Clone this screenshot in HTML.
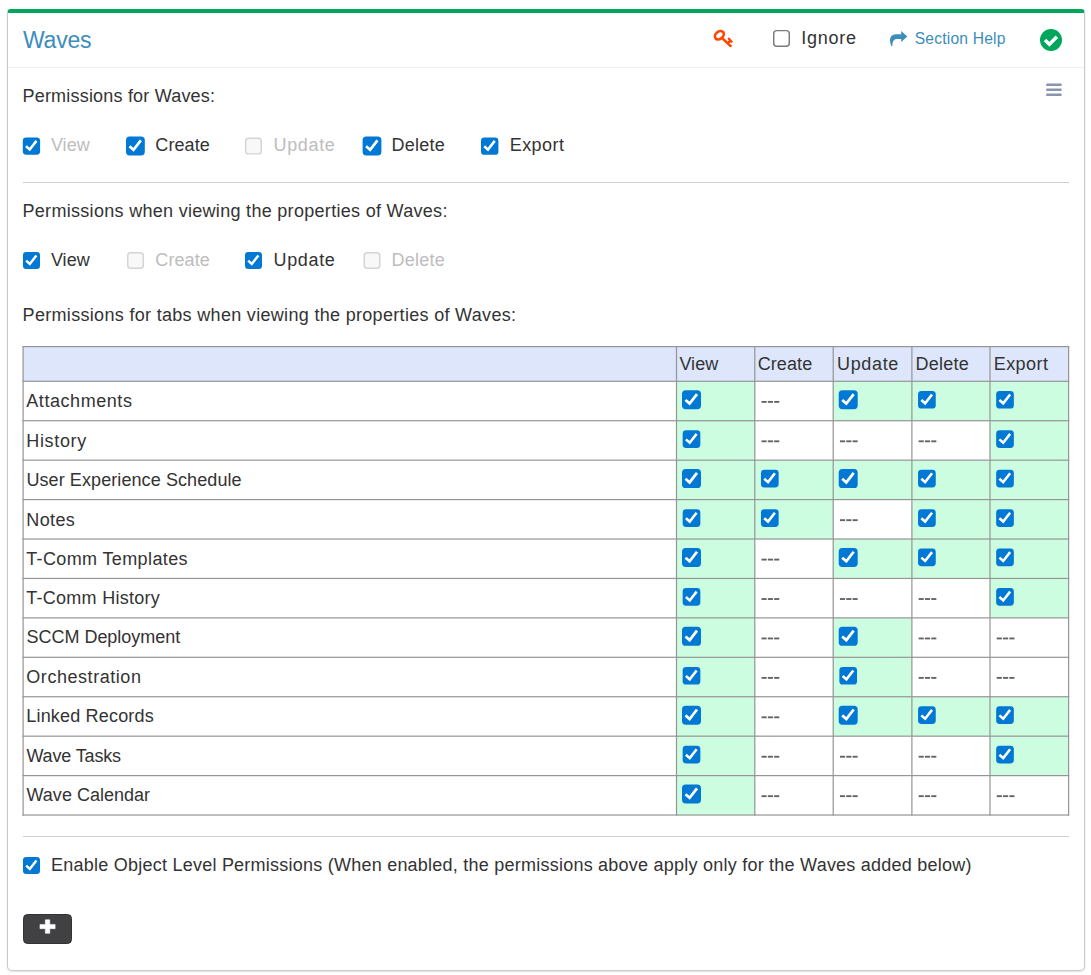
<!DOCTYPE html>
<html><head><meta charset="utf-8"><title>Waves</title>
<style>
html,body{margin:0;padding:0;background:#fff}
body{width:1091px;height:975px;position:relative;overflow:hidden;font-family:'Liberation Sans', sans-serif;color:#333}
.t{position:absolute;white-space:pre;line-height:normal}
.l{position:absolute;background:#8c8c8c}
.g{position:absolute;background:#cdfde0}
.hr{position:absolute;left:23px;width:1046px;height:1px;background:#cfcfcf}
</style></head><body>
<div style="position:absolute;left:7px;top:9px;width:1076px;height:957px;border:1px solid #c9c9c9;border-top:4px solid #00a65a;border-radius:4px 4px 5px 5px;background:#fff;box-shadow:0 1px 2px rgba(0,0,0,.12)"></div>
<div style="position:absolute;left:8px;top:67px;width:1076px;height:1px;background:#f1f1f1"></div>

<svg style="position:absolute;left:712px;top:29px" width="22" height="20" viewBox="0 0 22 20">
<g fill="none" stroke="#ff4500" stroke-width="2.4" stroke-linecap="round">
<ellipse cx="7.35" cy="6.3" rx="4.95" ry="3.6" stroke-width="2.7" transform="rotate(-40 7.35 6.3)"/>
<path d="M10 9 L18.6 17 M16.9 9.7 L19.6 12.7 M16.2 14 L18.2 11.4"/></g>
</svg>
<svg style="position:absolute;left:771px;top:27px" width="26" height="26" viewBox="0 0 26 26"><rect x="2.73" y="3.62" width="15.55" height="15.55" rx="3" fill="#fff" stroke="#7b7b7b" stroke-width="1.45"/></svg>
<svg style="position:absolute;left:889px;top:30px" width="19" height="17" viewBox="0 0 19 17">
<path d="M12.2 1 L18.3 6.5 L12.2 12.1 L12.2 8.9 L8.2 8.9 C5.4 9 3.2 10.6 3.4 16 L2.5 16.3 C-0.6 9.2 1.4 4.3 7 4.2 L12.2 4.2 Z" fill="#3c8dbc"/></svg>
<svg style="position:absolute;left:1040px;top:29px" width="22" height="22" viewBox="0 0 22 22">
<circle cx="11" cy="11" r="11" fill="#00a65a"/>
<path d="M5.0 11.0 L9.4 15.3 L16.9 7.7" fill="none" stroke="#fff" stroke-width="3.5"/></svg>
<svg style="position:absolute;left:1044px;top:80px" width="22" height="20" viewBox="0 0 22 20"><rect x="2.2" y="3.4" width="15.4" height="2.6" rx="0.6" fill="#8b94ae"/><rect x="2.2" y="8.5" width="15.4" height="2.6" rx="0.6" fill="#8b94ae"/><rect x="2.2" y="13.4" width="15.4" height="2.6" rx="0.6" fill="#8b94ae"/></svg>
<svg style="position:absolute;left:20px;top:135px" width="26" height="26" viewBox="0 0 26 26"><g transform="translate(2.80 2.40) scale(0.9105)"><rect width="19" height="19" rx="3.7" fill="#0078d4"/><path d="M3.5 9.7 L7.6 13.3 L15 3.8" fill="none" stroke="#fff" stroke-width="2.75"/></g></svg>
<svg style="position:absolute;left:124px;top:134px" width="26" height="26" viewBox="0 0 26 26"><g transform="translate(2.00 2.60) scale(0.9895)"><rect width="19" height="19" rx="3.7" fill="#0078d4"/><path d="M3.5 9.7 L7.6 13.3 L15 3.8" fill="none" stroke="#fff" stroke-width="2.75"/></g></svg>
<svg style="position:absolute;left:242px;top:135px" width="26" height="26" viewBox="0 0 26 26"><rect x="3.63" y="3.23" width="15.65" height="15.65" rx="3" fill="#f8f8f8" stroke="#d4d4d4" stroke-width="1.45"/></svg>
<svg style="position:absolute;left:360px;top:134px" width="26" height="26" viewBox="0 0 26 26"><g transform="translate(2.60 2.60) scale(0.9895)"><rect width="19" height="19" rx="3.7" fill="#0078d4"/><path d="M3.5 9.7 L7.6 13.3 L15 3.8" fill="none" stroke="#fff" stroke-width="2.75"/></g></svg>
<svg style="position:absolute;left:479px;top:135px" width="26" height="26" viewBox="0 0 26 26"><g transform="translate(2.00 2.40) scale(0.9158)"><rect width="19" height="19" rx="3.7" fill="#0078d4"/><path d="M3.5 9.7 L7.6 13.3 L15 3.8" fill="none" stroke="#fff" stroke-width="2.75"/></g></svg>
<svg style="position:absolute;left:21px;top:250px" width="26" height="26" viewBox="0 0 26 26"><g transform="translate(2.00 2.00) scale(0.8947)"><rect width="19" height="19" rx="3.7" fill="#0078d4"/><path d="M3.5 9.7 L7.6 13.3 L15 3.8" fill="none" stroke="#fff" stroke-width="2.75"/></g></svg>
<svg style="position:absolute;left:125px;top:250px" width="26" height="26" viewBox="0 0 26 26"><rect x="2.73" y="2.73" width="15.55" height="15.55" rx="3" fill="#f8f8f8" stroke="#d4d4d4" stroke-width="1.45"/></svg>
<svg style="position:absolute;left:243px;top:250px" width="26" height="26" viewBox="0 0 26 26"><g transform="translate(2.00 2.00) scale(0.8947)"><rect width="19" height="19" rx="3.7" fill="#0078d4"/><path d="M3.5 9.7 L7.6 13.3 L15 3.8" fill="none" stroke="#fff" stroke-width="2.75"/></g></svg>
<svg style="position:absolute;left:361px;top:250px" width="26" height="26" viewBox="0 0 26 26"><rect x="3.23" y="2.73" width="15.55" height="15.55" rx="3" fill="#f8f8f8" stroke="#d4d4d4" stroke-width="1.45"/></svg>
<div class="hr" style="top:182px"></div>
<div class="hr" style="top:836px"></div>
<svg style="position:absolute;left:0;top:0" width="1091" height="975" viewBox="0 0 1091 975"><rect x="23.1" y="346.6" width="1045.50" height="34.70" fill="#dde6fb"/><rect x="676.5" y="381.30" width="78.30" height="39.43" fill="#cdfde0"/><rect x="761.55" y="400.95" width="5.1" height="1.85" fill="#626262"/><rect x="767.85" y="400.95" width="5.1" height="1.85" fill="#626262"/><rect x="774.15" y="400.95" width="5.1" height="1.85" fill="#626262"/><rect x="833.2" y="381.30" width="78.70" height="39.43" fill="#cdfde0"/><rect x="911.9" y="381.30" width="78.10" height="39.43" fill="#cdfde0"/><rect x="990.0" y="381.30" width="78.60" height="39.43" fill="#cdfde0"/><rect x="676.5" y="420.73" width="78.30" height="39.43" fill="#cdfde0"/><rect x="761.55" y="440.38" width="5.1" height="1.85" fill="#626262"/><rect x="767.85" y="440.38" width="5.1" height="1.85" fill="#626262"/><rect x="774.15" y="440.38" width="5.1" height="1.85" fill="#626262"/><rect x="839.95" y="440.38" width="5.1" height="1.85" fill="#626262"/><rect x="846.25" y="440.38" width="5.1" height="1.85" fill="#626262"/><rect x="852.55" y="440.38" width="5.1" height="1.85" fill="#626262"/><rect x="918.65" y="440.38" width="5.1" height="1.85" fill="#626262"/><rect x="924.95" y="440.38" width="5.1" height="1.85" fill="#626262"/><rect x="931.25" y="440.38" width="5.1" height="1.85" fill="#626262"/><rect x="990.0" y="420.73" width="78.60" height="39.43" fill="#cdfde0"/><rect x="676.5" y="460.16" width="78.30" height="39.43" fill="#cdfde0"/><rect x="754.8" y="460.16" width="78.40" height="39.43" fill="#cdfde0"/><rect x="833.2" y="460.16" width="78.70" height="39.43" fill="#cdfde0"/><rect x="911.9" y="460.16" width="78.10" height="39.43" fill="#cdfde0"/><rect x="990.0" y="460.16" width="78.60" height="39.43" fill="#cdfde0"/><rect x="676.5" y="499.59" width="78.30" height="39.43" fill="#cdfde0"/><rect x="754.8" y="499.59" width="78.40" height="39.43" fill="#cdfde0"/><rect x="839.95" y="519.24" width="5.1" height="1.85" fill="#626262"/><rect x="846.25" y="519.24" width="5.1" height="1.85" fill="#626262"/><rect x="852.55" y="519.24" width="5.1" height="1.85" fill="#626262"/><rect x="911.9" y="499.59" width="78.10" height="39.43" fill="#cdfde0"/><rect x="990.0" y="499.59" width="78.60" height="39.43" fill="#cdfde0"/><rect x="676.5" y="539.02" width="78.30" height="39.43" fill="#cdfde0"/><rect x="761.55" y="558.67" width="5.1" height="1.85" fill="#626262"/><rect x="767.85" y="558.67" width="5.1" height="1.85" fill="#626262"/><rect x="774.15" y="558.67" width="5.1" height="1.85" fill="#626262"/><rect x="833.2" y="539.02" width="78.70" height="39.43" fill="#cdfde0"/><rect x="911.9" y="539.02" width="78.10" height="39.43" fill="#cdfde0"/><rect x="990.0" y="539.02" width="78.60" height="39.43" fill="#cdfde0"/><rect x="676.5" y="578.45" width="78.30" height="39.43" fill="#cdfde0"/><rect x="761.55" y="598.10" width="5.1" height="1.85" fill="#626262"/><rect x="767.85" y="598.10" width="5.1" height="1.85" fill="#626262"/><rect x="774.15" y="598.10" width="5.1" height="1.85" fill="#626262"/><rect x="839.95" y="598.10" width="5.1" height="1.85" fill="#626262"/><rect x="846.25" y="598.10" width="5.1" height="1.85" fill="#626262"/><rect x="852.55" y="598.10" width="5.1" height="1.85" fill="#626262"/><rect x="918.65" y="598.10" width="5.1" height="1.85" fill="#626262"/><rect x="924.95" y="598.10" width="5.1" height="1.85" fill="#626262"/><rect x="931.25" y="598.10" width="5.1" height="1.85" fill="#626262"/><rect x="990.0" y="578.45" width="78.60" height="39.43" fill="#cdfde0"/><rect x="676.5" y="617.88" width="78.30" height="39.43" fill="#cdfde0"/><rect x="761.55" y="637.53" width="5.1" height="1.85" fill="#626262"/><rect x="767.85" y="637.53" width="5.1" height="1.85" fill="#626262"/><rect x="774.15" y="637.53" width="5.1" height="1.85" fill="#626262"/><rect x="833.2" y="617.88" width="78.70" height="39.43" fill="#cdfde0"/><rect x="918.65" y="637.53" width="5.1" height="1.85" fill="#626262"/><rect x="924.95" y="637.53" width="5.1" height="1.85" fill="#626262"/><rect x="931.25" y="637.53" width="5.1" height="1.85" fill="#626262"/><rect x="996.75" y="637.53" width="5.1" height="1.85" fill="#626262"/><rect x="1003.05" y="637.53" width="5.1" height="1.85" fill="#626262"/><rect x="1009.35" y="637.53" width="5.1" height="1.85" fill="#626262"/><rect x="676.5" y="657.31" width="78.30" height="39.43" fill="#cdfde0"/><rect x="761.55" y="676.96" width="5.1" height="1.85" fill="#626262"/><rect x="767.85" y="676.96" width="5.1" height="1.85" fill="#626262"/><rect x="774.15" y="676.96" width="5.1" height="1.85" fill="#626262"/><rect x="833.2" y="657.31" width="78.70" height="39.43" fill="#cdfde0"/><rect x="918.65" y="676.96" width="5.1" height="1.85" fill="#626262"/><rect x="924.95" y="676.96" width="5.1" height="1.85" fill="#626262"/><rect x="931.25" y="676.96" width="5.1" height="1.85" fill="#626262"/><rect x="996.75" y="676.96" width="5.1" height="1.85" fill="#626262"/><rect x="1003.05" y="676.96" width="5.1" height="1.85" fill="#626262"/><rect x="1009.35" y="676.96" width="5.1" height="1.85" fill="#626262"/><rect x="676.5" y="696.74" width="78.30" height="39.43" fill="#cdfde0"/><rect x="761.55" y="716.39" width="5.1" height="1.85" fill="#626262"/><rect x="767.85" y="716.39" width="5.1" height="1.85" fill="#626262"/><rect x="774.15" y="716.39" width="5.1" height="1.85" fill="#626262"/><rect x="833.2" y="696.74" width="78.70" height="39.43" fill="#cdfde0"/><rect x="911.9" y="696.74" width="78.10" height="39.43" fill="#cdfde0"/><rect x="990.0" y="696.74" width="78.60" height="39.43" fill="#cdfde0"/><rect x="676.5" y="736.17" width="78.30" height="39.43" fill="#cdfde0"/><rect x="761.55" y="755.82" width="5.1" height="1.85" fill="#626262"/><rect x="767.85" y="755.82" width="5.1" height="1.85" fill="#626262"/><rect x="774.15" y="755.82" width="5.1" height="1.85" fill="#626262"/><rect x="839.95" y="755.82" width="5.1" height="1.85" fill="#626262"/><rect x="846.25" y="755.82" width="5.1" height="1.85" fill="#626262"/><rect x="852.55" y="755.82" width="5.1" height="1.85" fill="#626262"/><rect x="918.65" y="755.82" width="5.1" height="1.85" fill="#626262"/><rect x="924.95" y="755.82" width="5.1" height="1.85" fill="#626262"/><rect x="931.25" y="755.82" width="5.1" height="1.85" fill="#626262"/><rect x="990.0" y="736.17" width="78.60" height="39.43" fill="#cdfde0"/><rect x="676.5" y="775.60" width="78.30" height="39.43" fill="#cdfde0"/><rect x="761.55" y="795.25" width="5.1" height="1.85" fill="#626262"/><rect x="767.85" y="795.25" width="5.1" height="1.85" fill="#626262"/><rect x="774.15" y="795.25" width="5.1" height="1.85" fill="#626262"/><rect x="839.95" y="795.25" width="5.1" height="1.85" fill="#626262"/><rect x="846.25" y="795.25" width="5.1" height="1.85" fill="#626262"/><rect x="852.55" y="795.25" width="5.1" height="1.85" fill="#626262"/><rect x="918.65" y="795.25" width="5.1" height="1.85" fill="#626262"/><rect x="924.95" y="795.25" width="5.1" height="1.85" fill="#626262"/><rect x="931.25" y="795.25" width="5.1" height="1.85" fill="#626262"/><rect x="996.75" y="795.25" width="5.1" height="1.85" fill="#626262"/><rect x="1003.05" y="795.25" width="5.1" height="1.85" fill="#626262"/><rect x="1009.35" y="795.25" width="5.1" height="1.85" fill="#626262"/><rect x="22.50" y="346.00" width="1046.70" height="1.2" fill="#959595"/><rect x="22.50" y="380.70" width="1046.70" height="1.2" fill="#959595"/><rect x="22.50" y="420.13" width="1046.70" height="1.2" fill="#959595"/><rect x="22.50" y="459.56" width="1046.70" height="1.2" fill="#959595"/><rect x="22.50" y="498.99" width="1046.70" height="1.2" fill="#959595"/><rect x="22.50" y="538.42" width="1046.70" height="1.2" fill="#959595"/><rect x="22.50" y="577.85" width="1046.70" height="1.2" fill="#959595"/><rect x="22.50" y="617.28" width="1046.70" height="1.2" fill="#959595"/><rect x="22.50" y="656.71" width="1046.70" height="1.2" fill="#959595"/><rect x="22.50" y="696.14" width="1046.70" height="1.2" fill="#959595"/><rect x="22.50" y="735.57" width="1046.70" height="1.2" fill="#959595"/><rect x="22.50" y="775.00" width="1046.70" height="1.2" fill="#959595"/><rect x="22.50" y="814.43" width="1046.70" height="1.2" fill="#959595"/><rect x="22.50" y="346.00" width="1.2" height="469.63" fill="#959595"/><rect x="675.90" y="346.00" width="1.2" height="469.63" fill="#959595"/><rect x="754.20" y="346.00" width="1.2" height="469.63" fill="#959595"/><rect x="832.60" y="346.00" width="1.2" height="469.63" fill="#959595"/><rect x="911.30" y="346.00" width="1.2" height="469.63" fill="#959595"/><rect x="989.40" y="346.00" width="1.2" height="469.63" fill="#959595"/><rect x="1068.00" y="346.00" width="1.2" height="469.63" fill="#959595"/></svg>
<svg style="position:absolute;left:680px;top:388px" width="26" height="26" viewBox="0 0 26 26"><g transform="translate(2.00 2.25) scale(1.0000)"><rect width="19" height="19" rx="3.7" fill="#0078d4"/><path d="M3.5 9.7 L7.6 13.3 L15 3.8" fill="none" stroke="#fff" stroke-width="2.75"/></g></svg>
<svg style="position:absolute;left:836px;top:388px" width="26" height="26" viewBox="0 0 26 26"><g transform="translate(2.70 2.25) scale(1.0000)"><rect width="19" height="19" rx="3.7" fill="#0078d4"/><path d="M3.5 9.7 L7.6 13.3 L15 3.8" fill="none" stroke="#fff" stroke-width="2.75"/></g></svg>
<svg style="position:absolute;left:916px;top:388px" width="26" height="26" viewBox="0 0 26 26"><g transform="translate(2.05 2.90) scale(0.9316)"><rect width="19" height="19" rx="3.7" fill="#0078d4"/><path d="M3.5 9.7 L7.6 13.3 L15 3.8" fill="none" stroke="#fff" stroke-width="2.75"/></g></svg>
<svg style="position:absolute;left:994px;top:388px" width="26" height="26" viewBox="0 0 26 26"><g transform="translate(2.15 2.90) scale(0.9316)"><rect width="19" height="19" rx="3.7" fill="#0078d4"/><path d="M3.5 9.7 L7.6 13.3 L15 3.8" fill="none" stroke="#fff" stroke-width="2.75"/></g></svg>
<svg style="position:absolute;left:680px;top:428px" width="26" height="26" viewBox="0 0 26 26"><g transform="translate(2.65 2.33) scale(0.9316)"><rect width="19" height="19" rx="3.7" fill="#0078d4"/><path d="M3.5 9.7 L7.6 13.3 L15 3.8" fill="none" stroke="#fff" stroke-width="2.75"/></g></svg>
<svg style="position:absolute;left:994px;top:428px" width="26" height="26" viewBox="0 0 26 26"><g transform="translate(2.15 2.33) scale(0.9316)"><rect width="19" height="19" rx="3.7" fill="#0078d4"/><path d="M3.5 9.7 L7.6 13.3 L15 3.8" fill="none" stroke="#fff" stroke-width="2.75"/></g></svg>
<svg style="position:absolute;left:680px;top:467px" width="26" height="26" viewBox="0 0 26 26"><g transform="translate(2.00 2.11) scale(1.0000)"><rect width="19" height="19" rx="3.7" fill="#0078d4"/><path d="M3.5 9.7 L7.6 13.3 L15 3.8" fill="none" stroke="#fff" stroke-width="2.75"/></g></svg>
<svg style="position:absolute;left:758px;top:467px" width="26" height="26" viewBox="0 0 26 26"><g transform="translate(2.95 2.76) scale(0.9316)"><rect width="19" height="19" rx="3.7" fill="#0078d4"/><path d="M3.5 9.7 L7.6 13.3 L15 3.8" fill="none" stroke="#fff" stroke-width="2.75"/></g></svg>
<svg style="position:absolute;left:836px;top:467px" width="26" height="26" viewBox="0 0 26 26"><g transform="translate(2.70 2.11) scale(1.0000)"><rect width="19" height="19" rx="3.7" fill="#0078d4"/><path d="M3.5 9.7 L7.6 13.3 L15 3.8" fill="none" stroke="#fff" stroke-width="2.75"/></g></svg>
<svg style="position:absolute;left:916px;top:467px" width="26" height="26" viewBox="0 0 26 26"><g transform="translate(2.05 2.76) scale(0.9316)"><rect width="19" height="19" rx="3.7" fill="#0078d4"/><path d="M3.5 9.7 L7.6 13.3 L15 3.8" fill="none" stroke="#fff" stroke-width="2.75"/></g></svg>
<svg style="position:absolute;left:994px;top:467px" width="26" height="26" viewBox="0 0 26 26"><g transform="translate(2.15 2.76) scale(0.9316)"><rect width="19" height="19" rx="3.7" fill="#0078d4"/><path d="M3.5 9.7 L7.6 13.3 L15 3.8" fill="none" stroke="#fff" stroke-width="2.75"/></g></svg>
<svg style="position:absolute;left:680px;top:507px" width="26" height="26" viewBox="0 0 26 26"><g transform="translate(2.65 2.19) scale(0.9316)"><rect width="19" height="19" rx="3.7" fill="#0078d4"/><path d="M3.5 9.7 L7.6 13.3 L15 3.8" fill="none" stroke="#fff" stroke-width="2.75"/></g></svg>
<svg style="position:absolute;left:758px;top:507px" width="26" height="26" viewBox="0 0 26 26"><g transform="translate(2.95 2.19) scale(0.9316)"><rect width="19" height="19" rx="3.7" fill="#0078d4"/><path d="M3.5 9.7 L7.6 13.3 L15 3.8" fill="none" stroke="#fff" stroke-width="2.75"/></g></svg>
<svg style="position:absolute;left:916px;top:507px" width="26" height="26" viewBox="0 0 26 26"><g transform="translate(2.05 2.19) scale(0.9316)"><rect width="19" height="19" rx="3.7" fill="#0078d4"/><path d="M3.5 9.7 L7.6 13.3 L15 3.8" fill="none" stroke="#fff" stroke-width="2.75"/></g></svg>
<svg style="position:absolute;left:994px;top:507px" width="26" height="26" viewBox="0 0 26 26"><g transform="translate(2.15 2.19) scale(0.9316)"><rect width="19" height="19" rx="3.7" fill="#0078d4"/><path d="M3.5 9.7 L7.6 13.3 L15 3.8" fill="none" stroke="#fff" stroke-width="2.75"/></g></svg>
<svg style="position:absolute;left:680px;top:545px" width="26" height="26" viewBox="0 0 26 26"><g transform="translate(2.00 2.97) scale(1.0000)"><rect width="19" height="19" rx="3.7" fill="#0078d4"/><path d="M3.5 9.7 L7.6 13.3 L15 3.8" fill="none" stroke="#fff" stroke-width="2.75"/></g></svg>
<svg style="position:absolute;left:836px;top:545px" width="26" height="26" viewBox="0 0 26 26"><g transform="translate(2.70 2.97) scale(1.0000)"><rect width="19" height="19" rx="3.7" fill="#0078d4"/><path d="M3.5 9.7 L7.6 13.3 L15 3.8" fill="none" stroke="#fff" stroke-width="2.75"/></g></svg>
<svg style="position:absolute;left:916px;top:546px" width="26" height="26" viewBox="0 0 26 26"><g transform="translate(2.05 2.62) scale(0.9316)"><rect width="19" height="19" rx="3.7" fill="#0078d4"/><path d="M3.5 9.7 L7.6 13.3 L15 3.8" fill="none" stroke="#fff" stroke-width="2.75"/></g></svg>
<svg style="position:absolute;left:994px;top:546px" width="26" height="26" viewBox="0 0 26 26"><g transform="translate(2.15 2.62) scale(0.9316)"><rect width="19" height="19" rx="3.7" fill="#0078d4"/><path d="M3.5 9.7 L7.6 13.3 L15 3.8" fill="none" stroke="#fff" stroke-width="2.75"/></g></svg>
<svg style="position:absolute;left:680px;top:586px" width="26" height="26" viewBox="0 0 26 26"><g transform="translate(2.65 2.05) scale(0.9316)"><rect width="19" height="19" rx="3.7" fill="#0078d4"/><path d="M3.5 9.7 L7.6 13.3 L15 3.8" fill="none" stroke="#fff" stroke-width="2.75"/></g></svg>
<svg style="position:absolute;left:994px;top:586px" width="26" height="26" viewBox="0 0 26 26"><g transform="translate(2.15 2.05) scale(0.9316)"><rect width="19" height="19" rx="3.7" fill="#0078d4"/><path d="M3.5 9.7 L7.6 13.3 L15 3.8" fill="none" stroke="#fff" stroke-width="2.75"/></g></svg>
<svg style="position:absolute;left:680px;top:624px" width="26" height="26" viewBox="0 0 26 26"><g transform="translate(2.00 2.83) scale(1.0000)"><rect width="19" height="19" rx="3.7" fill="#0078d4"/><path d="M3.5 9.7 L7.6 13.3 L15 3.8" fill="none" stroke="#fff" stroke-width="2.75"/></g></svg>
<svg style="position:absolute;left:836px;top:624px" width="26" height="26" viewBox="0 0 26 26"><g transform="translate(2.70 2.83) scale(1.0000)"><rect width="19" height="19" rx="3.7" fill="#0078d4"/><path d="M3.5 9.7 L7.6 13.3 L15 3.8" fill="none" stroke="#fff" stroke-width="2.75"/></g></svg>
<svg style="position:absolute;left:680px;top:664px" width="26" height="26" viewBox="0 0 26 26"><g transform="translate(2.65 2.91) scale(0.9316)"><rect width="19" height="19" rx="3.7" fill="#0078d4"/><path d="M3.5 9.7 L7.6 13.3 L15 3.8" fill="none" stroke="#fff" stroke-width="2.75"/></g></svg>
<svg style="position:absolute;left:837px;top:664px" width="26" height="26" viewBox="0 0 26 26"><g transform="translate(2.35 2.91) scale(0.9316)"><rect width="19" height="19" rx="3.7" fill="#0078d4"/><path d="M3.5 9.7 L7.6 13.3 L15 3.8" fill="none" stroke="#fff" stroke-width="2.75"/></g></svg>
<svg style="position:absolute;left:680px;top:703px" width="26" height="26" viewBox="0 0 26 26"><g transform="translate(2.00 2.69) scale(1.0000)"><rect width="19" height="19" rx="3.7" fill="#0078d4"/><path d="M3.5 9.7 L7.6 13.3 L15 3.8" fill="none" stroke="#fff" stroke-width="2.75"/></g></svg>
<svg style="position:absolute;left:836px;top:703px" width="26" height="26" viewBox="0 0 26 26"><g transform="translate(2.70 2.69) scale(1.0000)"><rect width="19" height="19" rx="3.7" fill="#0078d4"/><path d="M3.5 9.7 L7.6 13.3 L15 3.8" fill="none" stroke="#fff" stroke-width="2.75"/></g></svg>
<svg style="position:absolute;left:916px;top:704px" width="26" height="26" viewBox="0 0 26 26"><g transform="translate(2.05 2.34) scale(0.9316)"><rect width="19" height="19" rx="3.7" fill="#0078d4"/><path d="M3.5 9.7 L7.6 13.3 L15 3.8" fill="none" stroke="#fff" stroke-width="2.75"/></g></svg>
<svg style="position:absolute;left:994px;top:704px" width="26" height="26" viewBox="0 0 26 26"><g transform="translate(2.15 2.34) scale(0.9316)"><rect width="19" height="19" rx="3.7" fill="#0078d4"/><path d="M3.5 9.7 L7.6 13.3 L15 3.8" fill="none" stroke="#fff" stroke-width="2.75"/></g></svg>
<svg style="position:absolute;left:680px;top:743px" width="26" height="26" viewBox="0 0 26 26"><g transform="translate(2.65 2.77) scale(0.9316)"><rect width="19" height="19" rx="3.7" fill="#0078d4"/><path d="M3.5 9.7 L7.6 13.3 L15 3.8" fill="none" stroke="#fff" stroke-width="2.75"/></g></svg>
<svg style="position:absolute;left:994px;top:743px" width="26" height="26" viewBox="0 0 26 26"><g transform="translate(2.15 2.77) scale(0.9316)"><rect width="19" height="19" rx="3.7" fill="#0078d4"/><path d="M3.5 9.7 L7.6 13.3 L15 3.8" fill="none" stroke="#fff" stroke-width="2.75"/></g></svg>
<svg style="position:absolute;left:680px;top:782px" width="26" height="26" viewBox="0 0 26 26"><g transform="translate(2.00 2.55) scale(1.0000)"><rect width="19" height="19" rx="3.7" fill="#0078d4"/><path d="M3.5 9.7 L7.6 13.3 L15 3.8" fill="none" stroke="#fff" stroke-width="2.75"/></g></svg>
<svg style="position:absolute;left:21px;top:855px" width="26" height="26" viewBox="0 0 26 26"><g transform="translate(2.00 2.00) scale(0.8947)"><rect width="19" height="19" rx="3.7" fill="#0078d4"/><path d="M3.5 9.7 L7.6 13.3 L15 3.8" fill="none" stroke="#fff" stroke-width="2.75"/></g></svg>
<div style="position:absolute;left:23px;top:914px;width:47px;height:28px;background:#414143;border:1px solid #333335;border-radius:4.5px"></div>
<svg style="position:absolute;left:38px;top:917px" width="20" height="20" viewBox="0 0 20 20"><path d="M7.3 2.8h4.5v4.65h5.35v4.2h-5.35v4.7h-4.5v-4.7h-5.35v-4.2h5.35z" fill="#fff" stroke="#fff" stroke-width="0.5" stroke-linejoin="round"/></svg>
<div class="t" style="left:22.9px;top:27.43px;font-size:23px;letter-spacing:-0.180px;color:#3c8dbc">Waves</div>
<div class="t" style="left:801.2px;top:27.96px;font-size:18px;letter-spacing:0.743px;color:#333">Ignore</div>
<div class="t" style="left:914.7px;top:30.13px;font-size:15.6px;letter-spacing:0.213px;color:#3c8dbc">Section Help</div>
<div class="t" style="left:22.5px;top:85.96px;font-size:18px;letter-spacing:0.197px;color:#333">Permissions for Waves:</div>
<div class="t" style="left:50.9px;top:134.96px;font-size:18px;letter-spacing:0.044px;color:#bdbdbd">View</div>
<div class="t" style="left:155.3px;top:134.96px;font-size:18px;letter-spacing:0.097px;color:#333">Create</div>
<div class="t" style="left:273.6px;top:134.96px;font-size:18px;letter-spacing:0.628px;color:#bdbdbd">Update</div>
<div class="t" style="left:391.5px;top:134.96px;font-size:18px;letter-spacing:0.249px;color:#333">Delete</div>
<div class="t" style="left:509.7px;top:134.96px;font-size:18px;letter-spacing:0.435px;color:#333">Export</div>
<div class="t" style="left:22.5px;top:200.96px;font-size:18px;letter-spacing:0.300px;color:#333">Permissions when viewing the properties of Waves:</div>
<div class="t" style="left:50.9px;top:249.96px;font-size:18px;letter-spacing:0.044px;color:#333">View</div>
<div class="t" style="left:155.3px;top:249.96px;font-size:18px;letter-spacing:0.097px;color:#bdbdbd">Create</div>
<div class="t" style="left:273.6px;top:249.96px;font-size:18px;letter-spacing:0.628px;color:#333">Update</div>
<div class="t" style="left:391.5px;top:249.96px;font-size:18px;letter-spacing:0.249px;color:#bdbdbd">Delete</div>
<div class="t" style="left:22.6px;top:304.96px;font-size:18px;letter-spacing:0.314px;color:#333">Permissions for tabs when viewing the properties of Waves:</div>
<div class="t" style="left:679.4px;top:353.96px;font-size:18px;letter-spacing:0.044px;color:#333">View</div>
<div class="t" style="left:757.7px;top:353.96px;font-size:18px;letter-spacing:0.097px;color:#333">Create</div>
<div class="t" style="left:837.1px;top:353.96px;font-size:18px;letter-spacing:0.628px;color:#333">Update</div>
<div class="t" style="left:915.6px;top:353.96px;font-size:18px;letter-spacing:0.249px;color:#333">Delete</div>
<div class="t" style="left:993.7px;top:353.96px;font-size:18px;letter-spacing:0.435px;color:#333">Export</div>
<div class="t" style="left:26.3px;top:390.96px;font-size:18px;letter-spacing:0.554px;color:#333">Attachments</div>
<div class="t" style="left:26.3px;top:430.96px;font-size:18px;letter-spacing:0.649px;color:#333">History</div>
<div class="t" style="left:26.4px;top:469.96px;font-size:18px;letter-spacing:0.090px;color:#333">User Experience Schedule</div>
<div class="t" style="left:26.3px;top:509.96px;font-size:18px;letter-spacing:0.374px;color:#333">Notes</div>
<div class="t" style="left:26.2px;top:548.96px;font-size:18px;letter-spacing:0.376px;color:#333">T-Comm Templates</div>
<div class="t" style="left:26.2px;top:587.96px;font-size:18px;letter-spacing:0.280px;color:#333">T-Comm History</div>
<div class="t" style="left:26.6px;top:626.96px;font-size:18px;letter-spacing:-0.036px;color:#333">SCCM Deployment</div>
<div class="t" style="left:26.3px;top:666.96px;font-size:18px;letter-spacing:0.548px;color:#333">Orchestration</div>
<div class="t" style="left:26.3px;top:705.96px;font-size:18px;letter-spacing:0.181px;color:#333">Linked Records</div>
<div class="t" style="left:26.4px;top:745.96px;font-size:18px;letter-spacing:-0.145px;color:#333">Wave Tasks</div>
<div class="t" style="left:26.5px;top:784.96px;font-size:18px;letter-spacing:0.016px;color:#333">Wave Calendar</div>
<div class="t" style="left:51.1px;top:854.96px;font-size:18px;letter-spacing:0.234px;color:#333">Enable Object Level Permissions (When enabled, the permissions above apply only for the Waves added below)</div>
</body></html>
